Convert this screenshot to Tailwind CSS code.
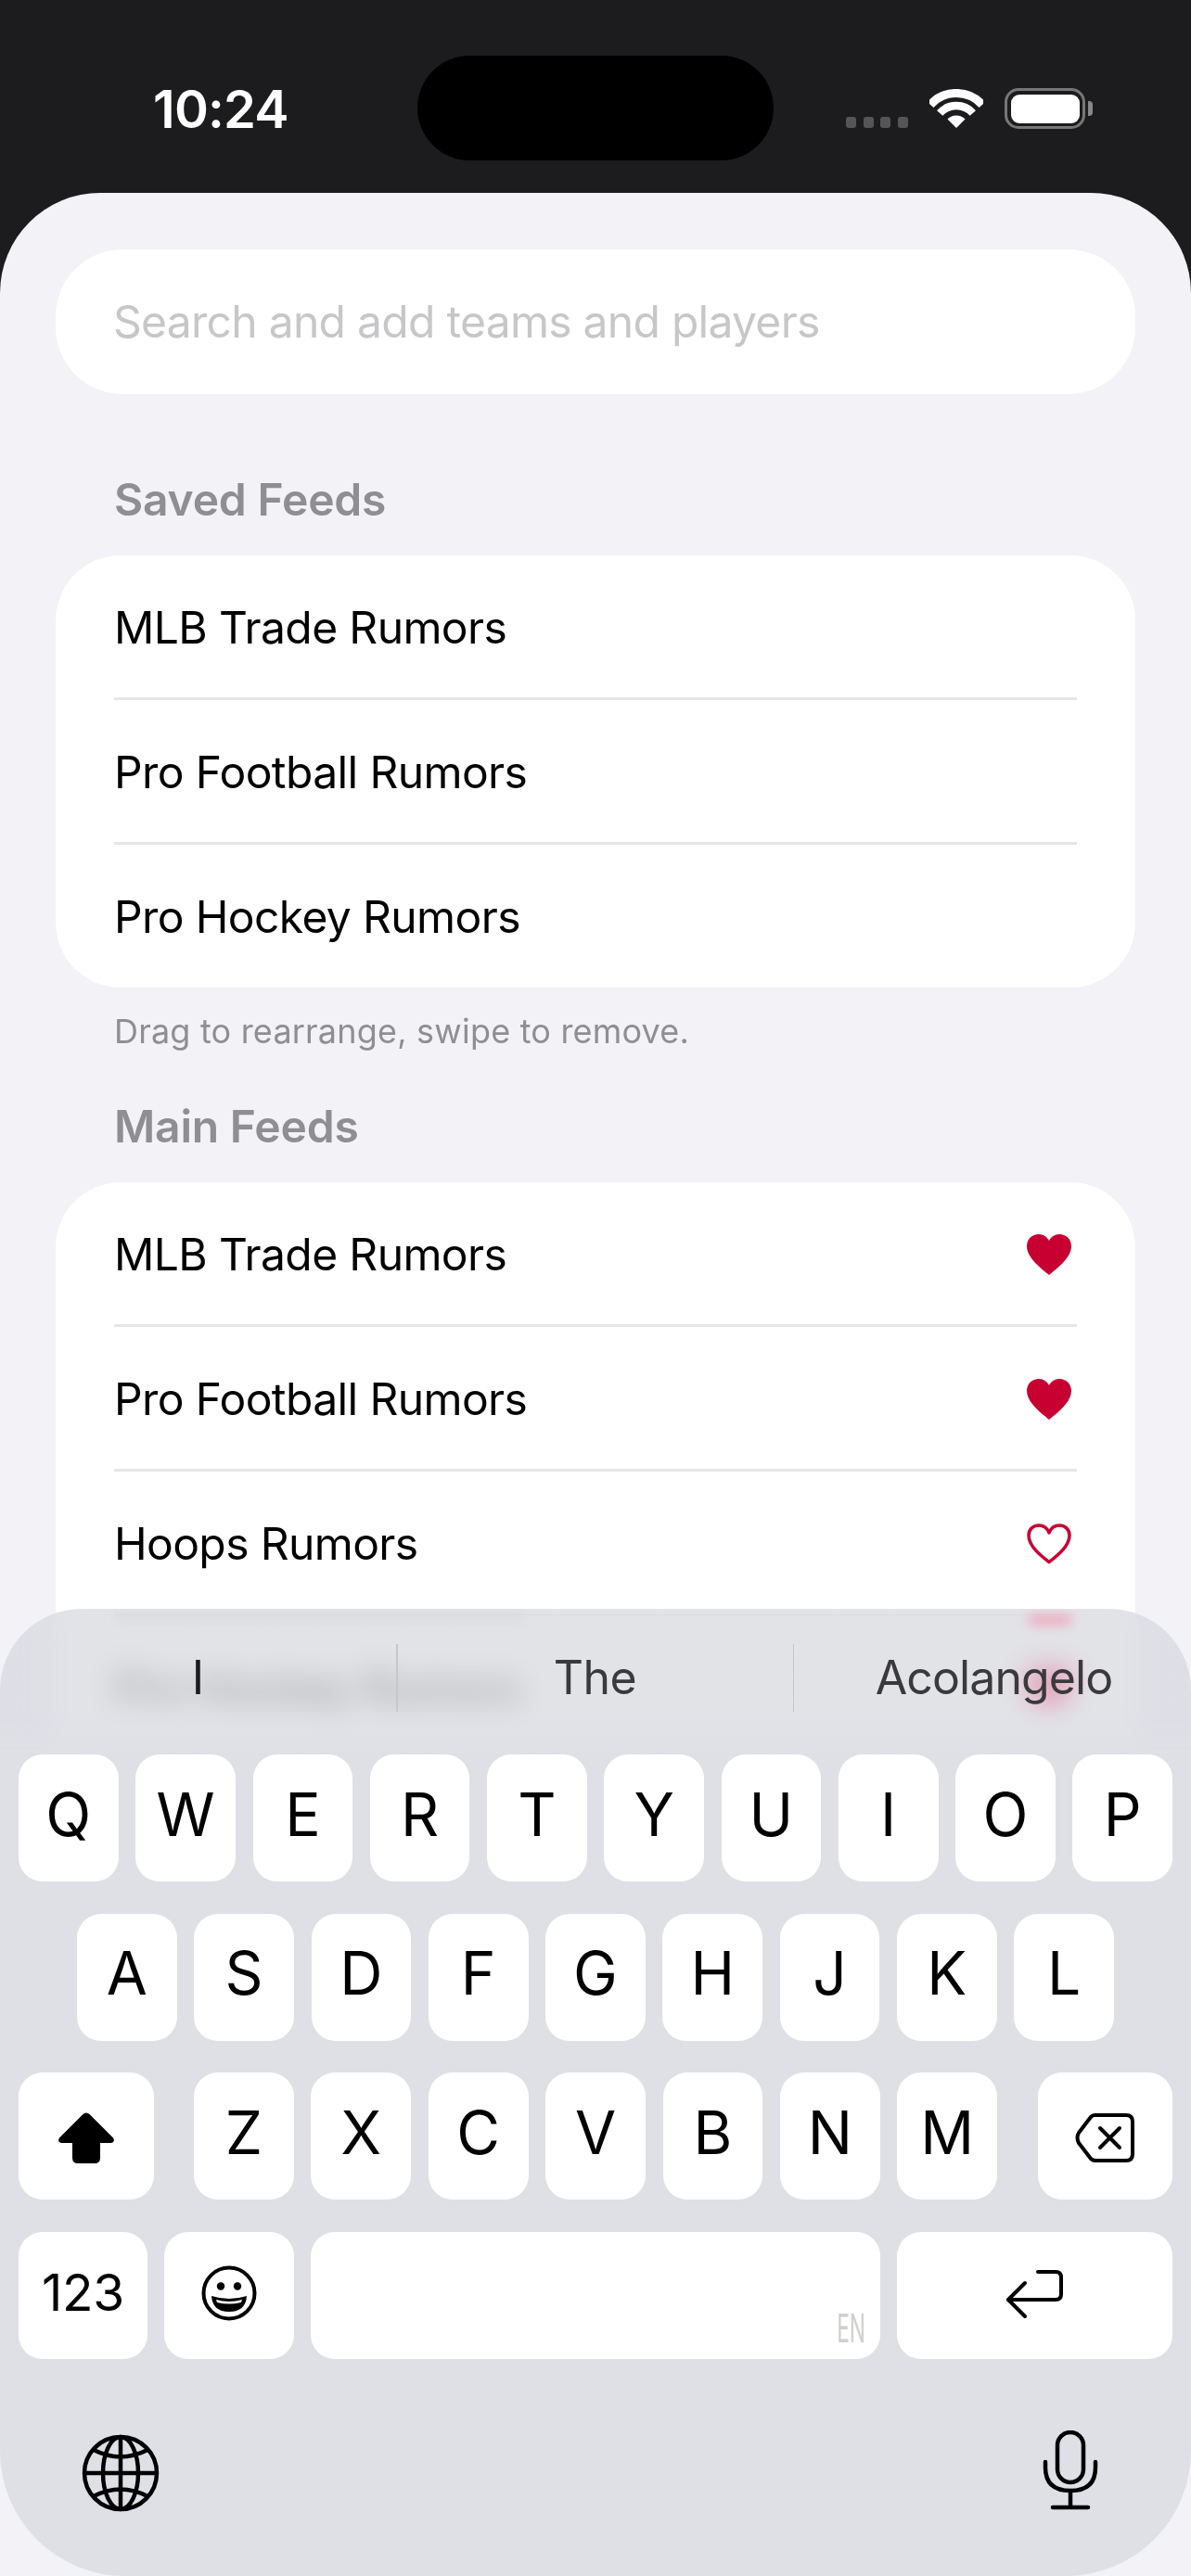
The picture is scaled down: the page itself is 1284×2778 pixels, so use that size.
<!DOCTYPE html>
<html>
<head>
<meta charset="utf-8">
<script src="https://cdn.jsdelivr.net/npm/@tailwindcss/browser@4"></script>
</head>
<body class="m-0 bg-[#1c1c1e]">
<div class="relative w-[1284px] h-[2778px] overflow-hidden bg-[#1c1c1e] font-['Inter',sans-serif] text-black">

  <!-- Status bar -->
  <div class="relative h-[208px] text-white">
    <div class="absolute left-[165px] top-[85px] text-[56px] leading-[66px] font-semibold tracking-[-0.8px]">10:24</div>
    <div class="absolute left-[450px] top-[60px] w-[384px] h-[113px] rounded-[57px] bg-black"></div>
    <div class="absolute left-[912px] top-[126px] flex gap-[7.5px]">
      <span class="w-[11px] h-[12px] rounded-[3px] bg-[#555]"></span>
      <span class="w-[11px] h-[12px] rounded-[3px] bg-[#555]"></span>
      <span class="w-[11px] h-[12px] rounded-[3px] bg-[#555]"></span>
      <span class="w-[11px] h-[12px] rounded-[3px] bg-[#555]"></span>
    </div>
    <svg class="absolute left-[1002px] top-[96px]" width="58" height="42" viewBox="0 0 58 42">
      <path d="M29 42L19.5 32.5A13.5 13.5 0 0 1 38.5 32.5Z" fill="#fff"/>
      <path d="M11.2 26A24 24 0 0 1 46.8 26" fill="none" stroke="#fff" stroke-width="8.5"/>
      <path d="M1.1 16.9A37.5 37.5 0 0 1 56.9 16.9" fill="none" stroke="#fff" stroke-width="9"/>
    </svg>
    <div class="absolute left-[1083px] top-[95px] w-[87px] h-[44px] rounded-[15px] border-[3.5px] border-[#777] p-[3.5px]">
      <div class="w-full h-full rounded-[9px] bg-white"></div>
    </div>
    <div class="absolute left-[1173px] top-[109px] w-[5px] h-[16px] rounded-r-[4px] bg-[#888]"></div>
  </div>

  <!-- Sheet -->
  <div class="h-[2570px] rounded-t-[108px] bg-[#f2f2f7] px-[60px] pt-[61px]">
    <div class="h-[156px] rounded-[72px] bg-white flex items-center px-[62px] text-[48px] tracking-[-0.72px] text-[#c7c7c9]">Search and add teams and players</div>

    <div class="mt-[84px] ml-[63px] h-[60px] flex items-center text-[48px] tracking-[-0.2px] font-semibold text-[#8e8e93]">Saved Feeds</div>
    <div class="mt-[30px] rounded-[70px] bg-white px-[63px] text-[48px] tracking-[-0.62px]">
      <div class="h-[153px] pt-[2px] flex items-center">MLB Trade Rumors</div>
      <div class="h-[159px] pt-[2px] flex items-center border-t-[3px] border-b-[3px] border-[#e6e6e8]">Pro Football Rumors</div>
      <div class="h-[154px] pt-[2px] flex items-center">Pro Hockey Rumors</div>
    </div>
    <div class="mt-[24px] ml-[63px] h-[46px] flex items-center text-[36px] tracking-[0.2px] text-[#8e8e93]">Drag to rearrange, swipe to remove.</div>

    <div class="mt-[50px] ml-[63px] h-[60px] flex items-center text-[48px] tracking-[-0.2px] font-semibold text-[#8e8e93]">Main Feeds</div>
    <div class="mt-[30px] rounded-t-[70px] bg-white px-[63px] text-[48px] tracking-[-0.62px]">
      <div class="h-[153px] pt-[2px] flex items-center justify-between">MLB Trade Rumors
        <svg width="48" height="44" viewBox="0 0 48 44" class="mr-[6px]"><path d="M24 44C17 38 0 26 0 13C0 5 6 0 13 0C18 0 22 3 24 7C26 3 30 0 35 0C42 0 48 5 48 13C48 26 31 38 24 44Z" fill="#c80032"/></svg>
      </div>
      <div class="h-[159px] pt-[2px] flex items-center justify-between border-t-[3px] border-b-[3px] border-[#e6e6e8]">Pro Football Rumors
        <svg width="48" height="44" viewBox="0 0 48 44" class="mr-[6px]"><path d="M24 44C17 38 0 26 0 13C0 5 6 0 13 0C18 0 22 3 24 7C26 3 30 0 35 0C42 0 48 5 48 13C48 26 31 38 24 44Z" fill="#c80032"/></svg>
      </div>
      <div class="h-[156px] pt-[2px] flex items-center justify-between border-b-[3px] border-[#e6e6e8]">Hoops Rumors
        <svg width="48" height="44" viewBox="0 0 48 44" class="mr-[6px]"><path d="M24 41.5C17 36 2 25 2 13C2 6 7 2 13 2C18 2 22 5 24 10C26 5 30 2 35 2C41 2 46 6 46 13C46 25 31 36 24 41.5Z" fill="none" stroke="#c80032" stroke-width="3.5" stroke-linejoin="round"/></svg>
      </div>
      <div class="h-[156px] flex items-center justify-between">Pro Hockey Rumors
        <svg width="48" height="44" viewBox="0 0 48 44" class="mr-[6px]"><path d="M24 44C17 38 0 26 0 13C0 5 6 0 13 0C18 0 22 3 24 7C26 3 30 0 35 0C42 0 48 5 48 13C48 26 31 38 24 44Z" fill="#c80032"/></svg>
      </div>
    </div>
  </div>

  <!-- Keyboard -->
  <div class="absolute left-0 top-[1735px] w-[1284px] h-[1043px] overflow-hidden rounded-t-[88px] rounded-b-[135px] backdrop-blur-[16px] backdrop-saturate-[1.6] bg-[linear-gradient(to_bottom,rgba(214,215,221,0.7)_0px,rgba(214,215,221,0.7)_110px,rgba(222,224,229,1)_165px)]">
    <div class="absolute left-[125px] top-[5px] w-[440px] h-[8px] bg-[#c9cace]/40 blur-[6px]"></div>
    <div class="absolute left-[1108px] top-[6px] w-[48px] h-[12px] rounded-full bg-[#f48aa6]/60 blur-[6px]"></div>

    <div class="relative mt-[38px] h-[73px] flex items-center text-[50px] text-[#3a3a3c]">
      <div class="w-[427px] text-center text-[#1c1c1e]">I</div>
      <div class="w-[1.5px] h-full bg-[#c6c7cb]"></div>
      <div class="w-[426px] text-center tracking-[-0.5px]">The</div>
      <div class="w-[1.5px] h-full bg-[#c6c7cb]"></div>
      <div class="flex-1 text-center pl-[3px] tracking-[-0.9px]">Acolangelo</div>
    </div>

    <div class="relative mt-[46px] flex flex-col gap-[34.5px] text-[64px]">
      <div class="flex gap-[18.6px] px-[20px]">
        <div class="flex-1 h-[137px] rounded-[26px] bg-white flex items-center justify-center pb-[8px]">Q</div>
        <div class="flex-1 h-[137px] rounded-[26px] bg-white flex items-center justify-center pb-[8px]">W</div>
        <div class="flex-1 h-[137px] rounded-[26px] bg-white flex items-center justify-center pb-[8px]">E</div>
        <div class="flex-1 h-[137px] rounded-[26px] bg-white flex items-center justify-center pb-[8px]">R</div>
        <div class="flex-1 h-[137px] rounded-[26px] bg-white flex items-center justify-center pb-[8px]">T</div>
        <div class="flex-1 h-[137px] rounded-[26px] bg-white flex items-center justify-center pb-[8px]">Y</div>
        <div class="flex-1 h-[137px] rounded-[26px] bg-white flex items-center justify-center pb-[8px]">U</div>
        <div class="flex-1 h-[137px] rounded-[26px] bg-white flex items-center justify-center pb-[8px]">I</div>
        <div class="flex-1 h-[137px] rounded-[26px] bg-white flex items-center justify-center pb-[8px]">O</div>
        <div class="flex-1 h-[137px] rounded-[26px] bg-white flex items-center justify-center pb-[8px]">P</div>
      </div>
      <div class="flex gap-[18.6px] pl-[83px] pr-[83px]">
        <div class="flex-1 h-[137px] rounded-[26px] bg-white flex items-center justify-center pb-[8px]">A</div>
        <div class="flex-1 h-[137px] rounded-[26px] bg-white flex items-center justify-center pb-[8px]">S</div>
        <div class="flex-1 h-[137px] rounded-[26px] bg-white flex items-center justify-center pb-[8px]">D</div>
        <div class="flex-1 h-[137px] rounded-[26px] bg-white flex items-center justify-center pb-[8px]">F</div>
        <div class="flex-1 h-[137px] rounded-[26px] bg-white flex items-center justify-center pb-[8px]">G</div>
        <div class="flex-1 h-[137px] rounded-[26px] bg-white flex items-center justify-center pb-[8px]">H</div>
        <div class="flex-1 h-[137px] rounded-[26px] bg-white flex items-center justify-center pb-[8px]">J</div>
        <div class="flex-1 h-[137px] rounded-[26px] bg-white flex items-center justify-center pb-[8px]">K</div>
        <div class="flex-1 h-[137px] rounded-[26px] bg-white flex items-center justify-center pb-[8px]">L</div>
      </div>
      <div class="flex justify-between px-[20px]">
        <div class="w-[146px] h-[137px] rounded-[26px] bg-white flex items-start justify-center pt-[43px]">
          <svg width="62" height="55" viewBox="0 0 62 55"><path d="M27.5 2L2 27.5Q-.5 32 4 33H16V49Q16 55 22 55H40Q46 55 46 49V33H58Q62.5 32 60 27.5L34.5 2Q31 -1 27.5 2Z" fill="#000"/></svg>
        </div>
        <div class="flex gap-[18.6px] w-[866px] -ml-[1px]">
          <div class="flex-1 h-[137px] rounded-[26px] bg-white flex items-center justify-center pb-[8px]">Z</div>
          <div class="flex-1 h-[137px] rounded-[26px] bg-white flex items-center justify-center pb-[8px]">X</div>
          <div class="flex-1 h-[137px] rounded-[26px] bg-white flex items-center justify-center pb-[8px]">C</div>
          <div class="flex-1 h-[137px] rounded-[26px] bg-white flex items-center justify-center pb-[8px]">V</div>
          <div class="flex-1 h-[137px] rounded-[26px] bg-white flex items-center justify-center pb-[8px]">B</div>
          <div class="flex-1 h-[137px] rounded-[26px] bg-white flex items-center justify-center pb-[8px]">N</div>
          <div class="flex-1 h-[137px] rounded-[26px] bg-white flex items-center justify-center pb-[8px]">M</div>
        </div>
        <div class="w-[145px] h-[137px] rounded-[26px] bg-white flex items-start justify-center pt-[44px] pr-[2px]">
          <svg width="64" height="53" viewBox="0 0 64 53" fill="none" stroke="#000" stroke-width="4" stroke-linecap="round" stroke-linejoin="round"><path d="M21 2H55Q62 2 62 9V44Q62 51 55 51H22Q19 51 17 49L4 32Q1 26 4 21L17 4Q19 2 21 2Z"/><path d="M27 16L48 37M48 16L27 37"/></svg>
        </div>
      </div>
      <div class="flex gap-[18px] px-[20px]">
        <div class="w-[139px] h-[137px] rounded-[26px] bg-white flex items-center justify-center pb-[6px] text-[55px] tracking-[-0.3px]">123</div>
        <div class="w-[140px] h-[137px] rounded-[26px] bg-white flex items-start justify-center pt-[36px]">
          <svg width="60" height="60" viewBox="0 0 60 60" fill="none"><circle cx="30" cy="30" r="27.5" stroke="#000" stroke-width="4"/><circle cx="21" cy="22.5" r="4.2" fill="#000"/><circle cx="39" cy="22.5" r="4.2" fill="#000"/><path d="M11 33Q30 39 49 33Q48 50 30 50Q12 50 11 33Z" fill="#000"/><path d="M16 37Q30 41 44 37L43 40Q30 43 17 40Z" fill="#fff"/></svg>
        </div>
        <div class="relative w-[614px] h-[137px] rounded-[26px] bg-white">
          <div class="absolute right-[16px] bottom-[18px] origin-bottom-right scale-x-[0.54] text-[42px] leading-[30px] text-[#cfcfd1]">EN</div>
        </div>
        <div class="flex-1 h-[137px] rounded-[26px] bg-white flex items-start justify-center pt-[40px] pr-[2px]">
          <svg width="62" height="54" viewBox="0 0 62 54" fill="none" stroke="#000" stroke-width="4" stroke-linecap="round" stroke-linejoin="round"><path d="M35 3H54Q60 3 60 9V27Q60 33 54 33H3"/><path d="M21 15L3 33L21 51"/></svg>
        </div>
      </div>
    </div>

    <div class="relative mt-[77px] flex items-center justify-between pl-[88px] pr-[100px]">
      <svg width="84" height="84" viewBox="0 0 84 84" fill="none" stroke="#000" stroke-width="4.5" class="mt-[4px]">
        <circle cx="42" cy="42" r="39"/><ellipse cx="42" cy="42" rx="19" ry="39"/><path d="M42 3V81M3 42H81M13 17Q42 32 71 17M13 67Q42 52 71 67"/>
      </svg>
      <svg width="60" height="88" viewBox="0 0 60 88" fill="none" stroke="#000" stroke-width="4.5" stroke-linecap="round">
        <rect x="16" y="2" width="28" height="54" rx="14"/><path d="M3 34V40Q3 65 30 65Q57 65 57 40V34"/><path d="M30 65V83M11 83H49"/>
      </svg>
    </div>
  </div>
</div>
</body>
</html>
